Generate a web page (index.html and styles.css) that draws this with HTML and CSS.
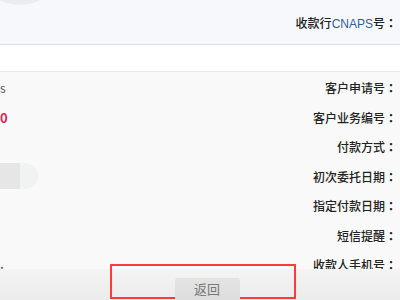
FILE: index.html
```html
<!DOCTYPE html>
<html>
<head>
<meta charset="utf-8">
<link rel="stylesheet" href="styles.css">
</head>
<body>
<div class="page">
  <div class="avatar"></div>
  <div class="top">
    <span class="label">收款行<span class="en">CNAPS</span>号<span class="colon">：</span></span>
  </div>
  <div class="strip"></div>
  <div class="detail">
    <div class="row"><span class="val dark">s</span><span class="label">客户申请号<span class="colon">：</span></span></div>
    <div class="row"><span class="val red">0</span><span class="label">客户业务编号<span class="colon">：</span></span></div>
    <div class="row"><span class="val"></span><span class="label">付款方式<span class="colon">：</span></span></div>
    <div class="row"><span class="blur"><i class="b1"></i><i class="b2"></i></span><span class="label">初次委托日期<span class="colon">：</span></span></div>
    <div class="row"><span class="val"></span><span class="label">指定付款日期<span class="colon">：</span></span></div>
    <div class="row"><span class="val"></span><span class="label">短信提醒<span class="colon">：</span></span></div>
    <div class="row"><span class="val dot">.</span><span class="label">收款人手机号<span class="colon">：</span></span></div>
  </div>
  <div class="footer">
    <div class="box">
      <button class="back">返回</button>
    </div>
  </div>
</div>
</body>
</html>
```
FILE: styles.css
```css
html, body {
  margin: 0;
  padding: 0;
  width: 400px;
  height: 300px;
  overflow: hidden;
  font-family: "Noto Sans CJK SC", "Liberation Sans", sans-serif;
  font-size: 12px;
  color: #222;
}
.page {
  position: relative;
  width: 400px;
  height: 300px;
  overflow: hidden;
  background: #f9f9f9;
}
.avatar {
  position: absolute;
  left: -25px;
  top: -85px;
  width: 90px;
  height: 90px;
  border-radius: 50%;
  background: #ececee;
}
.label {
  font-weight: 500;
  white-space: nowrap;
}
.colon {
  font-family: "Noto Sans CJK JP", sans-serif;
  font-weight: bold;
}
.top {
  height: 44px;
  background: #f7f8fc;
  border-bottom: 1px solid #cfdff2;
  display: flex;
  justify-content: flex-end;
  align-items: center;
  padding-right: 3px;
}
.en {
  color: #2f5f9e;
  font-family: "Liberation Sans", sans-serif;
  font-weight: normal;
  font-size: 12px;
}
.strip {
  height: 26px;
  background: #fff;
  border-bottom: 1px solid #e6e6e6;
}
.detail {
  padding-top: 1px;
  background: #f9f9f9;
}
.row {
  height: 29.5px;
  display: flex;
  align-items: center;
  justify-content: space-between;
  padding-right: 3px;
}
.val {
  font-weight: bold;
}
.dark { color: #555; font-weight: normal; }
.red { color: #d42a5c; font-size: 13px; }
.dot { color: #666; font-weight: bold; margin-top: -2px; }
.blur {
  display: flex;
  height: 26px;
}
.b1 {
  width: 20px;
  background: #e6e6e6;
}
.b2 {
  width: 18px;
  background: #f1f3f3;
  border-radius: 0 13px 13px 0;
}
.footer {
  position: absolute;
  left: 0;
  right: 0;
  bottom: 0;
  height: 31px;
  background: linear-gradient(#f4f4f4, #ebebeb);
}
.box {
  position: absolute;
  left: 110px;
  top: -5px;
  width: 182px;
  height: 31px;
  border: 2px solid #ff3a3a;
  display: flex;
  justify-content: center;
}
.back {
  margin-top: 12px;
  margin-left: 8px;
  width: 65px;
  height: 26px;
  border: none;
  border-radius: 3px 3px 0 0;
  background: linear-gradient(#e4e4e4, #dcdcdc);
  color: #777;
  font-family: "Noto Sans CJK SC", sans-serif;
  font-size: 13px;
  padding: 0 0 6px 0;
}
```
